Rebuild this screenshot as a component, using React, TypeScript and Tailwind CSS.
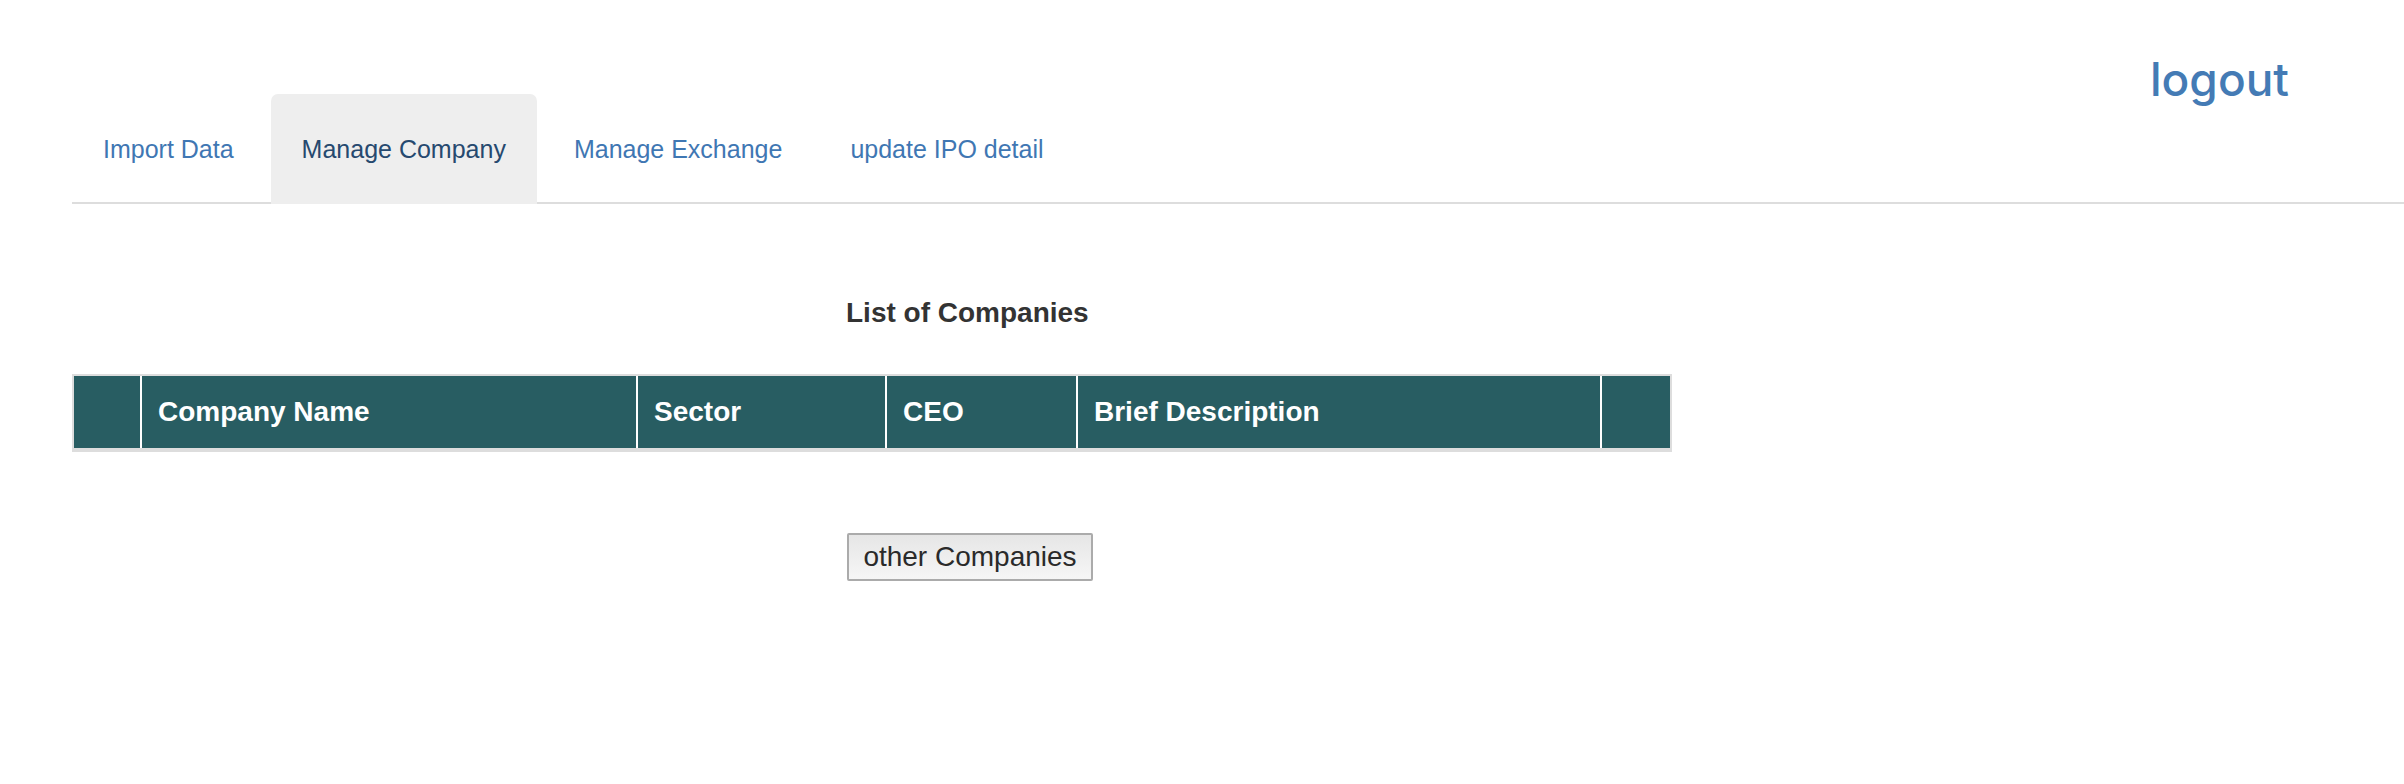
import React from "react";

const tabs = [
  { label: "Import Data", active: false },
  { label: "Manage Company", active: true },
  { label: "Manage Exchange", active: false },
  { label: "update IPO detail", active: false },
];

const cols = ["", "Company Name", "Sector", "CEO", "Brief Description", ""];

export default function App() {
  return (
    <div className="min-h-screen bg-white font-['Liberation_Sans',Arial,sans-serif] text-[#333]">
      <div className="pl-[72px]">
        <div className="flex h-[94px] justify-end pt-[64px] pr-[115px]">
          <a className="font-['Inter',sans-serif] text-[46px] font-medium leading-[30px] text-[#447bb5]">
            logout
          </a>
        </div>
        <ul className="flex border-b-2 border-[#dddddd]">
          {tabs.map((t) => (
            <li key={t.label} className="-mb-[2px] mr-[6px]">
              <a
                className={
                  t.active
                    ? "block rounded-t-[7px] bg-[#eeeeee] px-[31px] py-[37.5px] text-[25px] leading-[35px] text-[#26496f]"
                    : "block rounded-t-[7px] px-[31px] py-[37.5px] text-[25px] leading-[35px] text-[#3f77b3]"
                }
              >
                {t.label}
              </a>
            </li>
          ))}
        </ul>

        <div className="mt-[89px] pl-[774px]">
          <h3 className="text-[28px] font-bold leading-[40px] text-[#333]">List of Companies</h3>
        </div>

        <div className="mt-[41px] w-[1600px] border-2 border-b-4 border-[#dddddd]">
          <div className="grid h-[72px] grid-cols-[66px_494px_247px_189px_522px_68px] gap-x-[2px] bg-white">
            {cols.map((c, i) => (
              <div
                key={i}
                className="flex items-center bg-[#285d62] pl-[16px] text-[28px] font-bold text-white"
              >
                {c}
              </div>
            ))}
          </div>
        </div>

        <div className="mt-[81px] pl-[775px]">
          <button className="h-[48px] w-[246px] rounded-[2px] border-2 border-[#ababab] bg-gradient-to-b from-[#e6e6e6] to-[#f6f6f6] text-[28px] leading-none text-[#2a2a2a]">
            other Companies
          </button>
        </div>
      </div>
    </div>
  );
}
